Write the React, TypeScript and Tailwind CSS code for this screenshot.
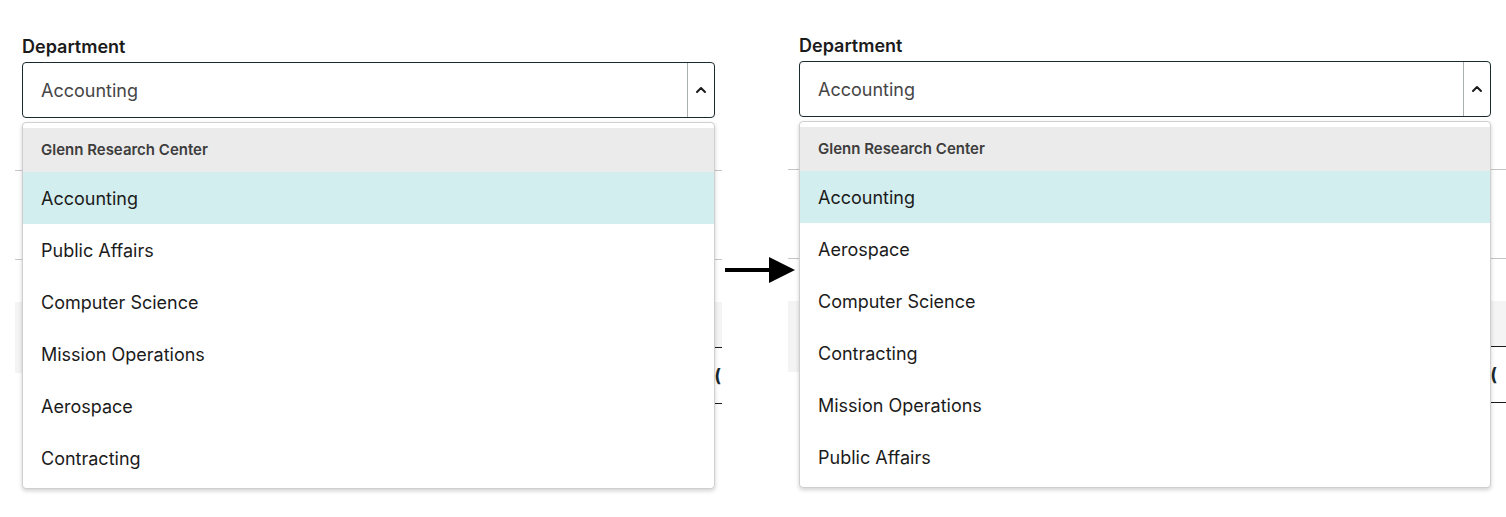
import { ChevronUp } from "lucide-react";

const LEFT_ITEMS = ["Accounting", "Public Affairs", "Computer Science", "Mission Operations", "Aerospace", "Contracting"];
const RIGHT_ITEMS = ["Accounting", "Aerospace", "Computer Science", "Contracting", "Mission Operations", "Public Affairs"];

function SelectPanel({
  items,
  className,
  innerClass,
  peekClass,
}: {
  items: string[];
  className: string;
  innerClass: string;
  peekClass: string;
}) {
  return (
    <div className={className}>
      {/* label + select */}
      <div className={innerClass}>
        <label className="block h-[24px] mb-[3px] text-[18px] leading-[24px] font-semibold text-[#1b1b1b]">Department</label>
        <div className="relative">
          <div className="flex h-[56px] items-stretch rounded-[4px] border border-[#1b2a2e] bg-white">
            <div className="flex flex-1 items-center pl-[18px] text-[18px] text-[#454545]">Accounting</div>
            <div className="flex w-[27px] items-center justify-center border-l border-[#a9aeb1]">
              <ChevronUp className="h-[16px] w-[16px] text-[#1b1b1b]" strokeWidth={3} />
            </div>
          </div>

          {/* open listbox */}
          <div className="absolute left-0 right-0 top-[60px] z-10 rounded-[4px] border border-[#cfcfcf] bg-white pt-[5px] pb-[4px] shadow-[0_2px_4px_rgba(0,0,0,0.18)]">
            <div className="flex h-[44px] items-center bg-[#ebebeb] pl-[18px] text-[15px] font-semibold text-[#3d3d3d]">
              Glenn Research Center
            </div>
            {items.map((item, i) => (
              <div
                key={item}
                className={
                  i === 0
                    ? "flex h-[52px] items-center bg-[#d3eeee] pl-[18px] text-[18px] text-[#1b1b1b]"
                    : "flex h-[52px] items-center pl-[18px] text-[18px] text-[#1b1b1b]"
                }
              >
                {item}
              </div>
            ))}
          </div>
        </div>
      </div>

      {/* page content sitting behind the open list */}
      <div className="mt-[52px] border-t border-[#c6c6c6]" />
      <div className="h-[89px] border-b border-[#c6c6c6]" />
      <div className="relative mt-[42px] h-[71px] bg-[#f4f4f5]">
        <div className="absolute right-0 top-[45px] h-[57px] w-[300px] border-y border-[#1b1b1b] bg-white">
          <span className={peekClass}>(</span>
        </div>
      </div>
    </div>
  );
}

export default function App() {
  return (
    <div className="flex h-[517px] w-full overflow-hidden bg-white pl-[15px] font-['Inter',sans-serif]">
      <SelectPanel
        items={LEFT_ITEMS}
        className="w-[707px] shrink-0 pt-[35px]"
        innerClass="pl-[7px] w-[700px]"
        peekClass="absolute right-[1px] top-[16px] text-[18px] leading-[24px] font-bold text-[#1b2a2e]"
      />

      <div className="relative z-20 w-[66px] shrink-0">
        <svg className="absolute left-[3px] top-[257px] overflow-visible" width="70" height="26" viewBox="0 0 70 26">
          <rect x="0" y="11" width="48" height="4" fill="#000" />
          <polygon points="44,0 70,13 44,26" fill="#000" />
        </svg>
      </div>

      <SelectPanel
        items={RIGHT_ITEMS}
        className="w-[718px] shrink-0 pt-[34px]"
        innerClass="pl-[11px] w-[703px]"
        peekClass="absolute right-[9px] top-[16px] text-[18px] leading-[24px] font-bold text-[#1b2a2e]"
      />
    </div>
  );
}
